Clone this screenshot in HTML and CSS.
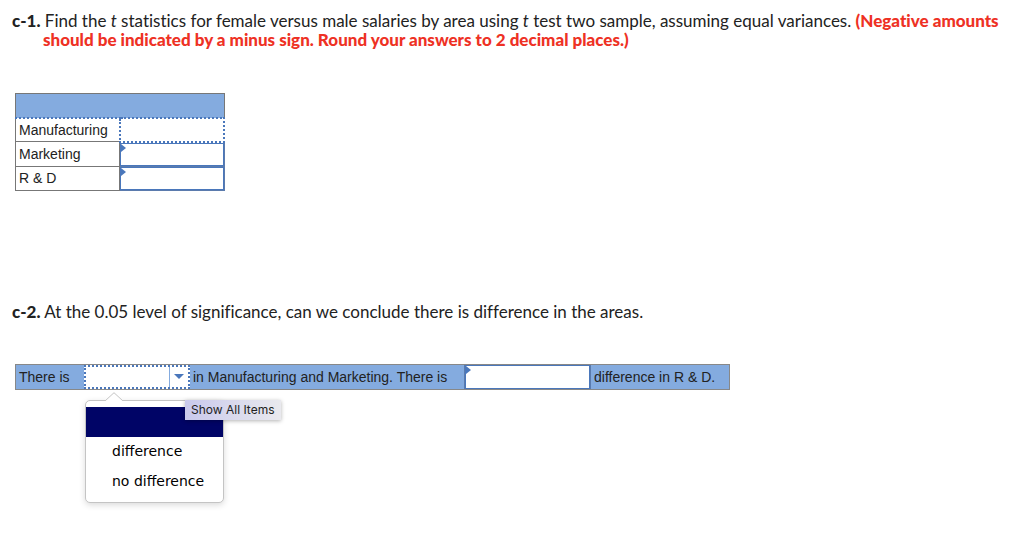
FILE: index.html
```
<!DOCTYPE html>
<html lang="en">
<head>
    <meta charset="UTF-8">
    <meta name="viewport" content="width=device-width, initial-scale=1.0">
    <title>Two Sample t Test</title>
    <link rel="stylesheet" href="styles.css">
</head>
<body>
    <main class="content">
        <p class="question"><b>c-1.</b> Find the <i>t</i> statistics for female versus male salaries by area using <i>t</i> test two sample, assuming equal variances. <b class="note">(Negative amounts should be indicated by a minus sign. Round your answers to 2 decimal places.)</b></p>

        <table class="stats">
            <thead>
                <tr><th colspan="2"></th></tr>
            </thead>
            <tbody>
                <tr class="active">
                    <th scope="row"><label for="manufacturing">Manufacturing</label></th>
                    <td><input type="text" id="manufacturing"></td>
                </tr>
                <tr>
                    <th scope="row"><label for="marketing">Marketing</label></th>
                    <td class="entry"><input type="text" id="marketing"></td>
                </tr>
                <tr>
                    <th scope="row"><label for="rd">R &amp; D</label></th>
                    <td class="entry"><input type="text" id="rd"></td>
                </tr>
            </tbody>
        </table>

        <p class="question">
            <b>c-2.</b> At the 0.05 level of significance, can we conclude there is difference in the areas.
        </p>

        <div class="sentence">
            <label class="words lead" for="answer1">There is</label>
            <div class="picker">
                <select id="answer1">
                    <option></option>
                    <option>difference</option>
                    <option>no difference</option>
                </select>
                <svg class="arrow" width="10" height="5" viewBox="0 0 10 5"><path d="M0 0h10L5 5z" fill="#4a77bb"/></svg>
                <div class="menu">
                    <svg class="pointer" width="18" height="9" viewBox="0 0 18 9"><path d="M0 9L9 .7 18 9" fill="#fff" stroke="#c4c4c4"/></svg>
                    <ul>
                        <li class="selected"></li>
                        <li>difference</li>
                        <li>no difference</li>
                    </ul>
                    <span class="tooltip">Show All Items</span>
                </div>
            </div>
            <label class="words middle" for="answer2">in Manufacturing and Marketing. There is</label>
            <div class="entry blank">
                <select id="answer2">
                    <option></option>
                    <option>difference</option>
                    <option>no difference</option>
                </select>
            </div>
            <span class="words last">difference in R &amp; D.</span>
        </div>
    </main>
</body>
</html>
```
FILE: styles.css
```
* {
    box-sizing: border-box;
}
body {
    margin: 0;
    min-height: 100vh;
    background: #fff;
    color: #222;
    font-family: "Liberation Sans", Arial, sans-serif;
    font-size: 14px;
}
.content {
    padding: 11px 15px;
}
.question {
    margin: 0 0 0 -3px;
    padding-left: 31px;
    text-indent: -31px;
    font-family: Lato, sans-serif;
    font-size: 17px;
    line-height: 19px;
    font-variant-ligatures: none;
}
.question b {
    font-weight: 900;
}
.question .note {
    color: #ee3124;
}
.stats {
    width: 210px;
    margin: 44px 0 111px;
    border-collapse: collapse;
    table-layout: fixed;
}
.stats th,
.stats td {
    height: 24px;
    padding: 0;
    border: 1px solid #777;
}
.stats thead th {
    background: #84abdf;
}
.stats tbody th {
    padding-left: 3px;
    font-weight: normal;
    text-align: left;
}
.stats .active td {
    border: 2px dotted #4a77bb;
}
.stats .active th {
    border-top: 2px dotted #4a77bb;
}
.stats input {
    display: block;
    width: 100%;
    height: 22px;
    padding: 0 4px;
    border: none;
    outline: none;
    background: none;
}
.entry {
    position: relative;
    background: #fff;
}
.stats .entry {
    border-color: #5b7bad;
}
.stats .entry input {
    height: 23px;
    border: 1px solid #4a77bb;
}
/* corner marker of an answer that is still open */
.entry::before {
    content: "";
    position: absolute;
    left: 1px;
    top: 1px;
    border-left: 5px solid #4a77bb;
    border-top: 4px solid transparent;
    border-bottom: 4px solid transparent;
}
.sentence {
    display: flex;
    width: 715px;
    max-width: 100%;
    height: 26px;
    margin-top: 43px;
    border: 1px solid #888;
    background: #84abdf;
    line-height: 24px;
    white-space: nowrap;
}
.words {
    padding-left: 3px;
}
.lead {
    width: 68px;
}
.middle {
    width: 274px;
}
.last {
    flex: 1;
}
.picker {
    position: relative;
    width: 106px;
    border: 2px dotted #4a77bb;
    background: #fff;
}
.picker select,
.blank select {
    display: block;
    width: 100%;
    height: 100%;
    border: none;
    outline: none;
    background: none;
    appearance: none;
}
.picker select {
    width: 84px;
    border-right: 1px solid #84abdf;
    border-radius: 0;
}
.arrow {
    position: absolute;
    right: 4px;
    top: 7px;
}
.blank {
    width: 127px;
    border: 1px solid #5b7bad;
    border-width: 0 1px;
}
.blank select {
    border: 1px solid #4a77bb;
    border-radius: 0;
}
.menu {
    position: absolute;
    left: -1px;
    top: 33px;
    width: 139px;
    border: 1px solid #c4c4c4;
    border-radius: 5px;
    background: #fff;
    box-shadow: 0 2px 6px rgba(0, 0, 0, 0.15);
    color: #000;
    font-family: "DejaVu Sans", Verdana, sans-serif;
}
.pointer {
    position: absolute;
    left: 19px;
    top: -9px;
}
.menu ul {
    margin: 0;
    padding: 6px 0 5px;
    list-style: none;
}
.menu li {
    height: 30px;
    padding-left: 26px;
    line-height: 29px;
}
.menu .selected {
    background: #000466;
}
.tooltip {
    position: absolute;
    left: 99px;
    top: -1px;
    padding: 0 7px 0 6px;
    background: linear-gradient(to right, #c9c9ec, #e9e9ee);
    box-shadow: 0 1px 4px rgba(0, 0, 0, 0.3);
    color: #222;
    font-family: Inter, sans-serif;
    font-size: 12px;
    line-height: 20px;
}
```
